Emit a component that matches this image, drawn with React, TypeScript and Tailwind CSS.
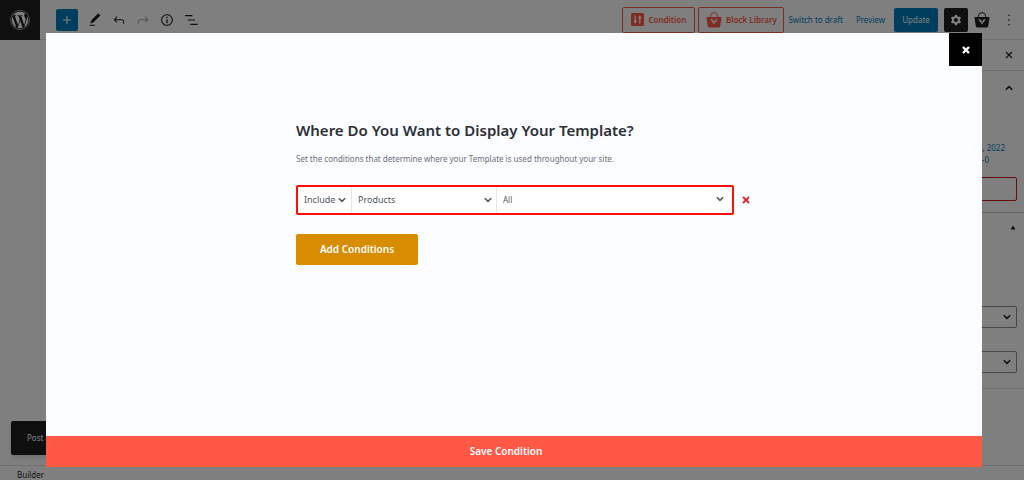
import type { ReactNode } from "react"
import { FaWordpress } from "react-icons/fa"

const Icon = ({ children, className = "size-4" }: { children: ReactNode; className?: string }) => (
    <svg viewBox="0 0 24 24" fill="currentColor" className={className} aria-hidden="true">
        {children}
    </svg>
)

const Chevron = ({ className = "" }: { className?: string }) => (
    <svg viewBox="0 0 8 6" fill="none" stroke="currentColor" strokeWidth="1.5" className={"w-2 h-[6px] " + className} aria-hidden="true">
        <path d="M0.8 1.2 4 4.4 7.2 1.2" />
    </svg>
)

const Cross = ({ className }: { className: string }) => (
    <svg viewBox="0 0 8 8" stroke="currentColor" className={className} aria-hidden="true">
        <path d="M1 1 7 7M7 1 1 7" />
    </svg>
)

const Basket = ({ className, mark }: { className: string; mark: string }) => (
    <svg viewBox="0 0 16 16" className={className} aria-hidden="true">
        <path d="M4.4 5.5V4.2a3.6 3.6 0 0 1 7.2 0v1.3" fill="none" stroke="currentColor" strokeWidth="1" />
        <path d="M1.4 4.9h13.2a.9.9 0 0 1 .9 1.1l-1.3 8a1.7 1.7 0 0 1-1.7 1.5h-9a1.7 1.7 0 0 1-1.7-1.5L.5 6a.9.9 0 0 1 .9-1.1Z" fill="currentColor" />
        <path d="M4.2 7.2h1.9l1.2 1.6h1.4l1.2-1.6h1.9L8 12.6Z" fill={mark} />
        <path d="M7.2 9.8h1.6L8 11z" fill="currentColor" />
    </svg>
)

const ToolButton = ({ label, children, className = "text-[#1e1e1e]" }: { label: string; children: ReactNode; className?: string }) => (
    <button aria-label={label} className={"flex size-6 shrink-0 items-center justify-center " + className}>
        {children}
    </button>
)

const Header = () => (
    <header className="flex h-10 shrink-0 items-center border-b border-[#e0e0e0] bg-white">
        <a href="#" aria-label="View Posts" className="flex size-10 shrink-0 items-center justify-center bg-[#1e1e1e] text-white">
            <FaWordpress className="size-5" />
        </a>

        <button aria-label="Add block" className="ml-4 mr-[5px] flex size-[22px] items-center justify-center rounded-xs bg-[#007cba] text-white">
            <Icon><path d="M11.2 6h1.6v5.2H18v1.6h-5.2V18h-1.6v-5.2H6v-1.6h5.2z" /></Icon>
        </button>
        <ToolButton label="Tools">
            <Icon><path d="M20.1 5.1L16.9 2 6.2 12.7l-1.3 4.4 4.5-1.3L20.1 5.1zM4 20.8h8v-1.5H4v1.5z" /></Icon>
        </ToolButton>
        <ToolButton label="Undo">
            <Icon><path d="M18.3 11.7c-.6-.6-1.4-.9-2.3-.9H6.7l2.9-3.3-1.1-1-4.5 5L8.5 16l1-1-2.7-2.7H16c.5 0 .9.2 1.3.5 1 1 1 3.4 1 4.5v.3h1.5v-.2c0-1.5 0-4.3-1.5-5.7z" /></Icon>
        </ToolButton>
        <ToolButton label="Redo" className="text-[#aaa]">
            <Icon><path d="M15.6 6.5l-1.1 1 2.9 3.3H8c-.9 0-1.7.3-2.3.9-1.4 1.5-1.4 4.2-1.4 5.6v.2h1.5v-.3c0-1.1 0-3.5 1-4.5.3-.3.7-.5 1.3-.5h9.2L14.5 15l1.1 1.1 4.6-4.6-4.6-5z" /></Icon>
        </ToolButton>
        <ToolButton label="Details">
            <Icon><path d="M12 3.2c-4.8 0-8.8 3.9-8.8 8.8 0 4.8 3.9 8.8 8.8 8.8 4.8 0 8.8-3.9 8.8-8.8 0-4.8-4-8.8-8.8-8.8zm0 16c-4 0-7.2-3.3-7.2-7.2C4.8 8 8 4.8 12 4.8s7.2 3.3 7.2 7.2c0 4-3.2 7.2-7.2 7.2zM11 17h2v-6h-2v6zm0-8h2V7h-2v2z" /></Icon>
        </ToolButton>
        <ToolButton label="List View">
            <Icon><path d="M3 4.5h11v1.7H3zM7 11.1h11v1.7H7zM11 17.7h11v1.7H11z" /></Icon>
        </ToolButton>

        <div className="ml-auto flex items-center text-[8px] text-[#007cba]">
            <button className="mr-[3px] flex h-[26px] w-[73px] items-center justify-center gap-1 rounded-xs border border-[#ff5a44] font-semibold text-[#ff5a44]">
                <svg viewBox="0 0 13 13" className="size-[13px]" aria-hidden="true">
                    <rect width="13" height="13" rx="1.5" fill="currentColor" />
                    <path d="M4.2 2.2v8M8.8 2.8v8" stroke="#fff" strokeWidth="1.2" />
                    <path d="M2.2 7.6h4L4.2 10.6zM6.8 5.4h4L8.8 2.4z" fill="#fff" />
                </svg>
                Condition
            </button>
            <button className="mr-1 flex h-[26px] w-[86px] items-center justify-center gap-1 rounded-xs border border-[#ff5a44] font-semibold text-[#ff5a44]">
                <Basket className="size-4" mark="#fff" />
                Block Library
            </button>
            <button className="mr-[13px]">Switch to draft</button>
            <button className="mr-[9px]">Preview</button>
            <button className="mr-[6px] h-6 w-11 rounded-xs bg-[#007cba] text-white">Update</button>
            <button aria-label="Settings" className="mr-[6px] flex size-6 items-center justify-center rounded-xs bg-[#1e1e1e] text-white">
                <Icon>
                    <path fillRule="evenodd" d="M10.289 4.836A1 1 0 0111.275 4h1.306a1 1 0 01.987.836l.244 1.466c.787.26 1.503.679 2.108 1.218l1.393-.522a1 1 0 011.216.437l.653 1.13a1 1 0 01-.23 1.273l-1.148.944a6.025 6.025 0 010 2.435l1.149.946a1 1 0 01.23 1.272l-.653 1.13a1 1 0 01-1.216.437l-1.394-.522c-.605.54-1.32.958-2.108 1.218l-.244 1.466a1 1 0 01-.987.836h-1.306a1 1 0 01-.986-.836l-.244-1.466a5.995 5.995 0 01-2.108-1.218l-1.394.522a1 1 0 01-1.217-.436l-.653-1.131a1 1 0 01.23-1.272l1.149-.946a6.026 6.026 0 010-2.435l-1.148-.944a1 1 0 01-.23-1.272l.653-1.131a1 1 0 011.217-.437l1.393.522a5.994 5.994 0 012.108-1.218l.244-1.466zM14.929 12a3 3 0 11-6 0 3 3 0 016 0z" />
                </Icon>
            </button>
            <button aria-label="Shop blocks" className="mr-[7px] text-[#1e1e1e]"><Basket className="size-4" mark="#fff" /></button>
            <ToolButton label="Options" className="mr-[3px] text-[#1e1e1e]">
                <Icon><path d="M11 4h2v2h-2zM11 11h2v2h-2zM11 18h2v2h-2z" /></Icon>
            </ToolButton>
        </div>
    </header>
)

const SidebarSelect = ({ label }: { label: string }) => (
    <div className="relative h-[22px]">
        <select aria-label={label} className="h-full w-full appearance-none rounded-xs border border-[#8c8c8c] bg-white">
            <option></option>
        </select>
        <Chevron className="absolute right-[6px] top-2" />
    </div>
)

const Sidebar = () => (
    <aside className="w-[187px] shrink-0 border-l border-[#e0e0e0] bg-white text-[#1e1e1e]">
        <div className="flex h-[31px] items-center justify-end border-b border-[#e0e0e0] pr-[11px]">
            <button aria-label="Close settings"><Cross className="size-2 stroke-[1.2]" /></button>
        </div>
        <div className="h-[142px] border-b border-[#c8c8c8] px-[7px] pt-[14px]">
            <button aria-label="Status and visibility" className="ml-auto mr-1 block"><Chevron className="rotate-180" /></button>
            <div className="mt-[51px] text-right text-[8px] leading-3 text-[#007cba]">
                <p className="pr-3">June 15, 2022</p>
                <p className="pr-7">10:20 UTC-0</p>
            </div>
            <button aria-label="Move to trash" className="mt-[11px] h-6 w-full rounded-xs border border-[#cc1818]"></button>
        </div>
        <div className="h-[176px] border-b border-[#e0e0e0] px-[7px] pt-3">
            <button aria-label="Template settings" className="ml-auto mr-px block">
                <svg viewBox="0 0 6 5" className="h-[5px] w-[6px]" fill="currentColor" aria-hidden="true"><path d="M3 0.5 5.5 4.5H0.5z" /></svg>
            </button>
            <div className="mt-19 flex flex-col gap-[23px]">
                <SidebarSelect label="Template type" />
                <SidebarSelect label="Template width" />
            </div>
        </div>
    </aside>
)

const ConditionSelect = ({ label, options, className, chevron }: { label: string; options: string[]; className: string; chevron: string }) => (
    <div className={"relative h-full " + className}>
        <select aria-label={label} className="h-full w-full appearance-none bg-transparent pl-[6px] outline-none">
            {options.map((o) => <option key={o}>{o}</option>)}
        </select>
        <Chevron className={"pointer-events-none absolute text-[#50575e] " + chevron} />
    </div>
)

const ConditionModal = () => (
    <div className="fixed inset-0 bg-black/50 pb-[13px] pl-[46px] pr-[42px] pt-[33px]">
        <div role="dialog" aria-labelledby="condition-title" className="flex h-full flex-col bg-[#fbfcff]">
            <button aria-label="Close" className="ml-auto flex size-[33px] shrink-0 items-center justify-center bg-black text-white">
                <Cross className="size-2 stroke-[2.4]" />
            </button>

            <div className="mx-auto w-[436px] grow pt-[52px]">
                <h2 id="condition-title" className="text-[15px] leading-6 font-semibold text-[#2c2f36]">Where Do You Want to Display Your Template?</h2>
                <p className="mt-[11px] text-[8px] leading-3 text-[#6b7078]">Set the conditions that determine where your Template is used throughout your site.</p>

                {/* Condition row */}
                <div className="-mr-8 mt-5 flex items-center gap-2">
                    <div className="flex h-[30px] w-[438px] rounded-xs border-2 border-[#ff0d0d] bg-white text-[9px] text-[#50575e]">
                        <ConditionSelect label="Rule" options={["Include", "Exclude"]} className="w-[54px] border-r border-[#e8e8ec]" chevron="right-[5px] top-[10px]" />
                        <ConditionSelect label="Post type" options={["Products", "Pages"]} className="w-[145px] border-r border-[#e8e8ec]" chevron="right-1 top-[10px]" />
                        <ConditionSelect label="Items" options={["All"]} className="grow text-[8px]" chevron="right-2 top-[9px]" />
                    </div>
                    <button aria-label="Remove condition" className="text-[#dc2626]"><Cross className="size-2 stroke-[1.8]" /></button>
                </div>

                <button className="mt-[19px] h-[31px] w-[122px] rounded-xs bg-[#d88c00] text-[10px] font-semibold text-white">Add Conditions</button>
            </div>

            <button className="h-[31px] shrink-0 bg-[#ff5845] pr-4 text-[10px] font-semibold text-white">Save Condition</button>
        </div>
    </div>
)

const App = () => {
    return (
        <div className="flex h-screen flex-col bg-white font-['Noto_Sans',sans-serif]">
            <Header />
            <div className="flex min-h-0 grow">
                <main className="relative grow">
                    {/* Snackbar */}
                    <div className="absolute bottom-[10px] left-[11px] flex h-[34px] w-40 items-center rounded-xs bg-[#1e1e1e] px-4 text-[8px] text-white shadow-md">Post updated.</div>
                </main>
                <Sidebar />
            </div>
            <footer className="h-[15px] shrink-0 border-t border-[#e0e0e0] pl-[17px] pt-[3px] text-[8px] leading-3 text-[#1e1e1e]">Builder</footer>

            <ConditionModal />
        </div>
    )
}

export default App
